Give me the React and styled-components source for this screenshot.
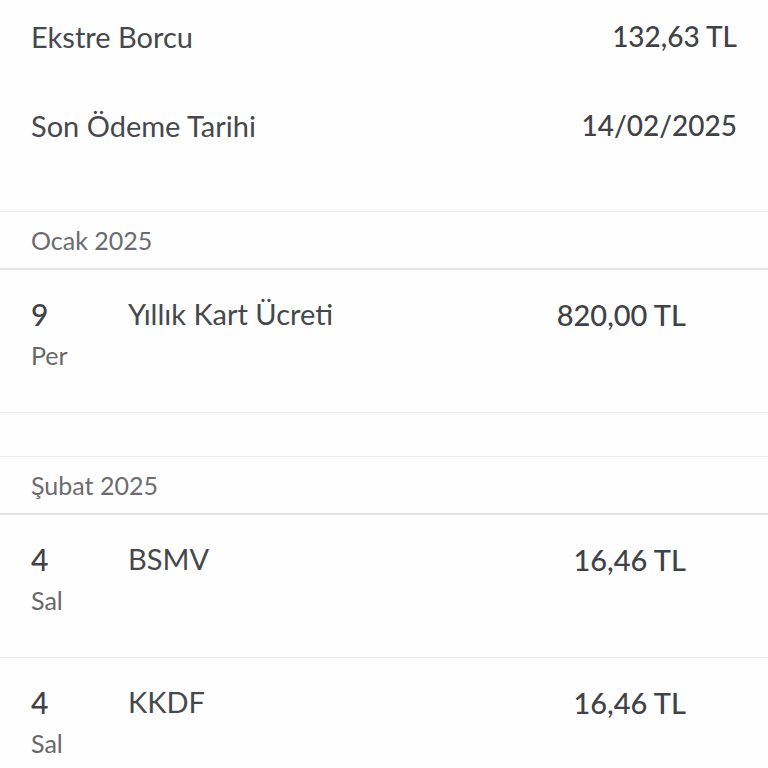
import styled, { createGlobalStyle } from "styled-components";

const GlobalStyle = createGlobalStyle`
  body {
    margin: 0;
    background: #fefefe;
    font-family: Lato, "Open Sans", sans-serif;
    color: #3f4246;
  }
`;

const summary = [
  { label: "Ekstre Borcu", value: "132,63 TL" },
  { label: "Son Ödeme Tarihi", value: "14/02/2025" },
];

const months = [
  {
    title: "Ocak 2025",
    items: [{ day: "9", weekday: "Per", desc: "Yıllık Kart Ücreti", amount: "820,00 TL" }],
  },
  {
    title: "Şubat 2025",
    items: [
      { day: "4", weekday: "Sal", desc: "BSMV", amount: "16,46 TL" },
      { day: "4", weekday: "Sal", desc: "KKDF", amount: "16,46 TL" },
    ],
  },
];

export default function App() {
  return (
    <>
      <GlobalStyle />
      <Page>
        <Summary>
          {summary.map((s) => (
            <SummaryRow key={s.label}>
              <Label>{s.label}</Label>
              <Value>{s.value}</Value>
            </SummaryRow>
          ))}
        </Summary>
        {months.map((m, i) => (
          <section key={m.title}>
            {i > 0 && <Spacer />}
            <MonthHeader>{m.title}</MonthHeader>
            {m.items.map((t, j) => (
              <TxRow key={j}>
                <DateCol>
                  <Day>{t.day}</Day>
                  <Weekday>{t.weekday}</Weekday>
                </DateCol>
                <Desc>{t.desc}</Desc>
                <Amount>{t.amount}</Amount>
              </TxRow>
            ))}
          </section>
        ))}
      </Page>
    </>
  );
}

const Page = styled.div`
  width: 768px;
  height: 768px;
  overflow: hidden;
`;

const Summary = styled.div`
  padding: 2px 31px 0 31px;
  height: 209px;
  border-bottom: 1px solid #ececec;
`;

const SummaryRow = styled.div`
  display: flex;
  justify-content: space-between;
  align-items: center;
  height: 68px;
  margin-bottom: 21px;
`;

const Label = styled.span`
  font-size: 29px;
  color: #45484c;
`;

const Value = styled.span`
  font-size: 28px;
  font-weight: 500;
  color: #3f4246;
`;

const MonthHeader = styled.div`
  height: 56px;
  display: flex;
  align-items: center;
  padding-left: 31px;
  font-size: 25px;
  color: #6a6c70;
  border-bottom: 2px solid #e4e4e4;
`;

const Spacer = styled.div`
  height: 43px;
  border-bottom: 1px solid #ececec;
`;

const TxRow = styled.div`
  display: grid;
  grid-template-columns: 97px 1fr auto;
  padding: 26px 82px 0 31px;
  height: 116px;
  border-bottom: 1px solid #ececec;
`;

const DateCol = styled.div`
  display: flex;
  flex-direction: column;
  gap: 8px;
`;

const Day = styled.span`
  font-size: 30px;
  font-weight: 500;
  color: #3f4246;
`;

const Weekday = styled.span`
  font-size: 25px;
  color: #66686c;
`;

const Desc = styled.span`
  font-size: 29px;
  color: #45484c;
`;

const Amount = styled.span`
  font-size: 29px;
  font-weight: 500;
  color: #3f4246;
  padding-top: 1px;
`;
